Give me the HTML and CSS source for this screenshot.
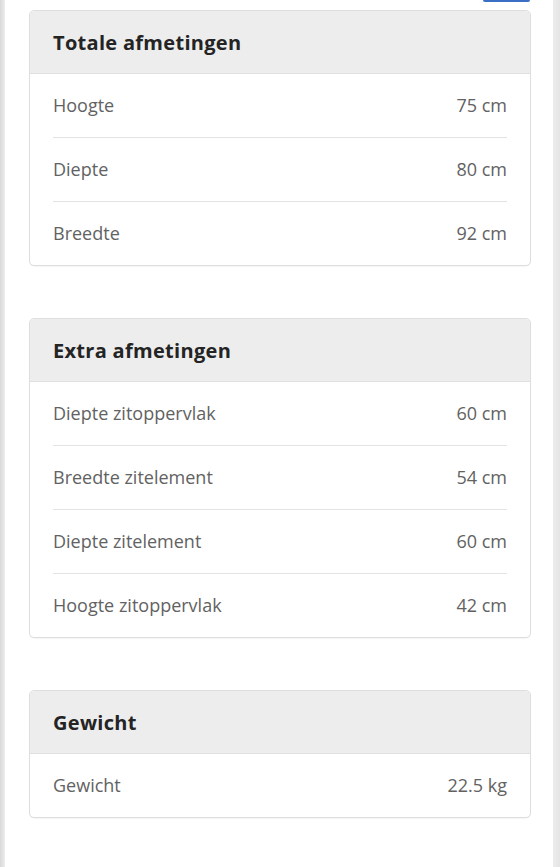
FILE: index.html
```html
<!DOCTYPE html>
<html lang="nl">
<head>
<meta charset="utf-8">
<link rel="stylesheet" href="styles.css">
</head>
<body>
<div class="page">
  <div class="topbar"><span class="topbtn"></span></div>
  <section class="card">
    <h2 class="card-head">Totale afmetingen</h2>
    <div class="row"><span>Hoogte</span><span>75 cm</span></div>
    <div class="row"><span>Diepte</span><span>80 cm</span></div>
    <div class="row"><span>Breedte</span><span>92 cm</span></div>
  </section>
  <section class="card">
    <h2 class="card-head">Extra afmetingen</h2>
    <div class="row"><span>Diepte zitoppervlak</span><span>60 cm</span></div>
    <div class="row"><span>Breedte zitelement</span><span>54 cm</span></div>
    <div class="row"><span>Diepte zitelement</span><span>60 cm</span></div>
    <div class="row"><span>Hoogte zitoppervlak</span><span>42 cm</span></div>
  </section>
  <section class="card">
    <h2 class="card-head">Gewicht</h2>
    <div class="row"><span>Gewicht</span><span>22.5 kg</span></div>
  </section>
</div>
</body>
</html>
```
FILE: styles.css
```css
html, body {
  margin: 0;
  padding: 0;
}
body {
  background: linear-gradient(to right, #d9d9d9 0, #ececec 5px, #fff 5px, #fff 553px, #ececec 553px, #e4e4e4 560px);
  font-family: "Open Sans", "Noto Sans", sans-serif;
  height: 867px;
  overflow: hidden;
}
.page {
  padding: 0 29px 0 29px;
  display: flex;
  flex-direction: column;
  gap: 52px;
}
.topbar {
  height: 10px;
  margin-bottom: -52px;
  display: flex;
  justify-content: flex-end;
}
.topbtn {
  width: 47px;
  height: 2px;
  background: #3a6fc4;
  border-radius: 0 0 3px 3px;
  margin-right: 1px;
}
.card {
  border: 1px solid #dedede;
  border-radius: 5px;
  overflow: hidden;
  background: #fff;
  box-shadow: 0 1px 1px rgba(0,0,0,0.04);
}
.card-head {
  margin: 0;
  background: #ededed;
  height: 62px;
  display: flex;
  align-items: center;
  padding: 0 23px;
  font-size: 20px;
  font-weight: 700;
  color: #242424;
  border-bottom: 1px solid #e0e0e0;
  letter-spacing: 0.3px;
}
.row {
  margin: 0 23px;
  height: 63px;
  display: flex;
  align-items: center;
  justify-content: space-between;
  font-size: 18px;
  color: #626262;
  border-bottom: 1px solid #e3e3e3;
}
.row > span {
  margin-top: -2px;
}
.row:last-child {
  border-bottom: none;
  height: 63px;
}
```
